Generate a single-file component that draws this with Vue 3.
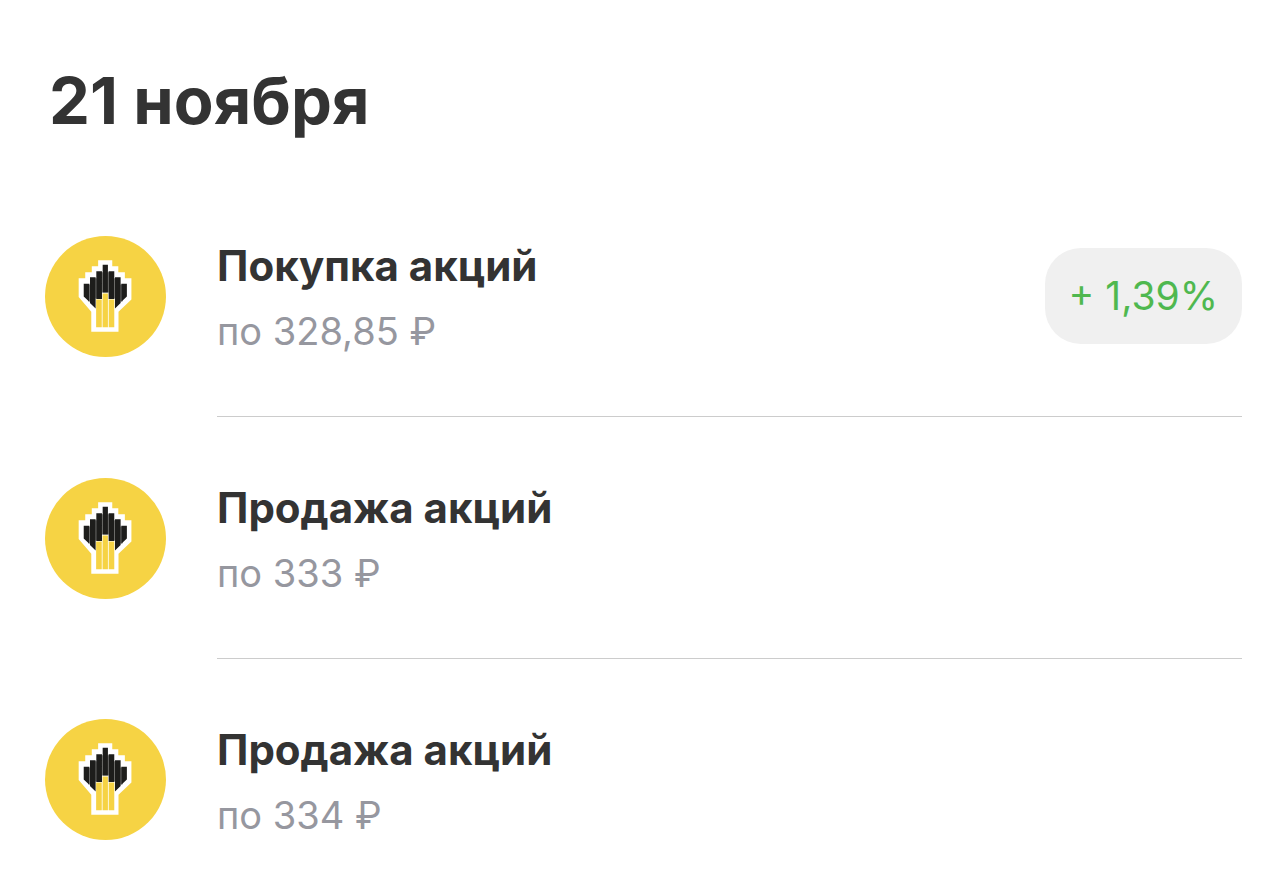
<script setup>
const operations = [
  { title: 'Покупка акций', price: 'по 328,85 ₽', change: '+ 1,39%' },
  { title: 'Продажа акций', price: 'по 333 ₽' },
  { title: 'Продажа акций', price: 'по 334 ₽' },
]
</script>

<template>
  <main class="history">
    <h1 class="date">21 ноября</h1>
    <ul class="list">
      <li v-for="(item, index) in operations" :key="index" class="row">
        <svg class="logo" viewBox="0 0 120 120" aria-hidden="true">
          <circle cx="60" cy="60" r="60" fill="#f6d344" />
          <path fill="#fff" d="M52.700 24h14v6h6v6h6.500v6h6.500v21L72.900 75v20h-27V75L33.400 60.500V42h6.500v-6h6.500v-6h6.300z" />
          <path fill="#8c8c8a" d="M56 36h8v20h-8zM49 42h3v20h-3zM68 42h3v20h-3zM43 48h3v17h-3zM74 48h3v17h-3z" />
          <path fill="#1d1d1b" d="M57.200 28.500h5.200V56h-5.200zM50.900 35h5.600v27.500h-5.600zM63.100 35h5.600v27.500h-5.600zM44.600 41h5.600v31l-5.600-5.500zM69.400 41h5.600v25.500L69.400 72zM38.400 47.300h5.500v18L38.400 60zM75.700 47.300h5.500V60l-5.500 5.300z" />
          <path fill="#f6d344" d="M50.700 63h5.600v27.500h-5.600zM57.100 57h5.300v33.500h-5.300zM63.200 63h5.500v27.500h-5.500z" />
        </svg>
        <div class="body">
          <div class="text">
            <h2 class="title">{{ item.title }}</h2>
            <p class="price">{{ item.price }}</p>
          </div>
          <span v-if="item.change" class="badge">{{ item.change }}</span>
        </div>
      </li>
    </ul>
  </main>
</template>

<style scoped>
.history {
  padding: 63px 42px 0 45px;
  font-family: Inter, "Liberation Sans", sans-serif;
  color: #333;
}
.date {
  margin: 0 0 36px 4px;
  font-size: 65px;
  line-height: 76px;
  font-weight: 700;
}
.list {
  margin: 0;
  padding: 0;
  list-style: none;
}
.row {
  display: flex;
  align-items: center;
  gap: 51px;
}
.logo {
  width: 121px;
  height: 121px;
  flex: none;
}
.body {
  flex: 1;
  display: flex;
  align-items: center;
  justify-content: space-between;
  height: 241px;
  border-bottom: 1px solid #ccc;
}
.row:last-child .body {
  border-bottom: 0;
}
.text {
  padding-top: 8px;
}
.title {
  margin: 0;
  font-size: 42px;
  line-height: 62px;
  font-weight: 700;
}
.price {
  margin: 0;
  font-size: 38px;
  line-height: 68px;
  color: #96979f;
}
.badge {
  padding: 0 24px;
  border-radius: 36px;
  background: #f0f0f0;
  color: #4fb84f;
  font-size: 39px;
  line-height: 96px;
}
</style>

<style>
body {
  background: #fff;
}
</style>
